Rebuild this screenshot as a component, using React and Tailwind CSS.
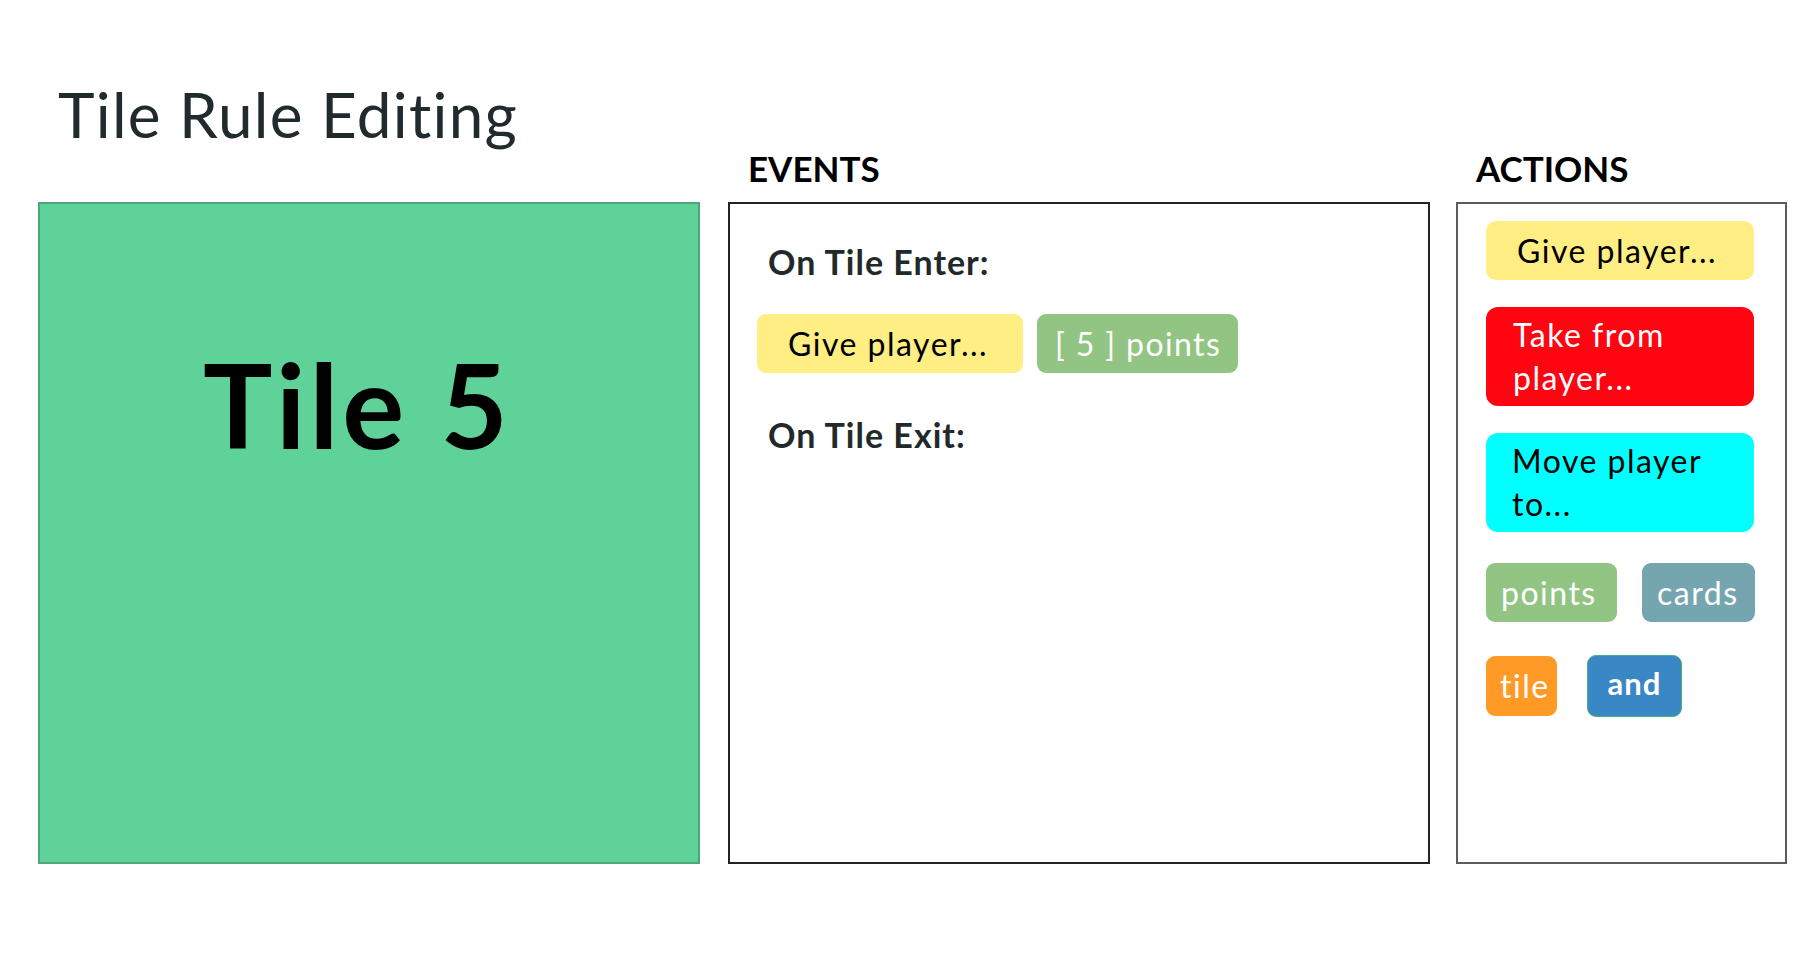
export default function App() {
  return (
    <div className="min-h-screen bg-white font-['Lato',sans-serif] pl-[38px]">
      <div className="flex">
        {/* tile column */}
        <div className="flex flex-col w-[662px]">
          <div className="h-[202px] flex items-end pl-[20px]">
            <h1 className="text-[62px] leading-none font-normal tracking-[1.3px] text-[#212a2d] mb-[57px]">
              Tile Rule Editing
            </h1>
          </div>
          <div className="h-[662px] bg-[#5fd29a] border-2 border-[#4fa67a] pl-[163px] pt-[143px]">
            <span className="block text-[116px] leading-none font-bold text-black tracking-[4px]">
              Tile 5
            </span>
          </div>
        </div>

        {/* events column */}
        <div className="flex flex-col w-[702px] ml-[28px]">
          <div className="h-[202px] flex items-end pl-[20px]">
            <h2 className="text-[35px] leading-none font-bold text-black mb-[16px]">EVENTS</h2>
          </div>
          <div className="h-[662px] border-2 border-[#1f2426] pl-[27px] pt-[41px]">
            <h3 className="text-[34px] leading-none font-bold tracking-[1px] text-[#22292b] pl-[11px]">On Tile Enter:</h3>
            <div className="flex gap-[14px] mt-[35px]">
              <div className="w-[266px] h-[59px] rounded-[9px] bg-[#ffee83] flex items-center pl-[31px] text-[32px] tracking-[1.5px] text-black">
                Give player...
              </div>
              <div className="w-[201px] h-[59px] rounded-[9px] bg-[#92c483] flex items-center pl-[18px] text-[32px] tracking-[1.4px] text-white">
                [ 5 ] points
              </div>
            </div>
            <h3 className="text-[34px] leading-none font-bold tracking-[1px] text-[#22292b] pl-[11px] mt-[45px]">On Tile Exit:</h3>
          </div>
        </div>

        {/* actions column */}
        <div className="flex flex-col w-[331px] ml-[26px]">
          <div className="h-[202px] flex items-end pl-[20px]">
            <h2 className="text-[35px] leading-none font-bold text-black mb-[16px]">ACTIONS</h2>
          </div>
          <div className="h-[662px] border-2 border-[#575d60] pl-[28px] pt-[17px] flex flex-col items-start">
            <div className="w-[268px] rounded-[10px] bg-[#ffee83] pl-[31px] py-[8px] text-[32px] leading-[43px] tracking-[1.5px] text-black">
              Give player...
            </div>
            <div className="w-[268px] rounded-[12px] bg-[#ff0512] pl-[27px] pr-[20px] pt-[6px] pb-[7px] mt-[27px] text-[32px] leading-[43px] tracking-[1.5px] text-white">
              Take from player...
            </div>
            <div className="w-[268px] rounded-[12px] bg-[#00ffff] pl-[26px] pr-[20px] pt-[6px] pb-[7px] mt-[27px] text-[32px] leading-[43px] tracking-[1.5px] text-black">
              Move player to...
            </div>
            <div className="flex gap-[25px] mt-[31px]">
              <div className="w-[131px] h-[59px] rounded-[9px] bg-[#92c483] flex items-center pl-[15px] text-[32px] tracking-[1.5px] text-white">
                points
              </div>
              <div className="w-[113px] h-[59px] rounded-[9px] bg-[#75a6b0] flex items-center pl-[15px] text-[32px] tracking-[1.5px] text-white">
                cards
              </div>
            </div>
            <div className="flex items-start gap-[30px] mt-[33px]">
              <div className="w-[71px] h-[60px] mt-[1px] rounded-[9px] bg-[#ff9a26] flex items-center pl-[14px] text-[32px] tracking-[1.5px] text-white">
                tile
              </div>
              <div className="w-[95px] h-[62px] rounded-[9px] bg-[#3a87c6] border border-[#4caf7f] flex items-center justify-center pb-[6px] text-[31px] font-bold tracking-[1px] text-white">
                and
              </div>
            </div>
          </div>
        </div>
      </div>
    </div>
  );
}
